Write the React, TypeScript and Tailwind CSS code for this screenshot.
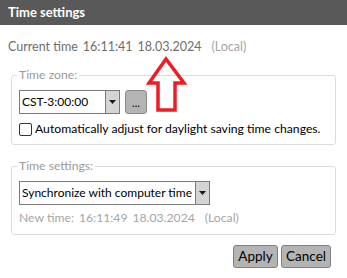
import React from 'react';

const font = { fontFamily: 'Lato, "Noto Sans", sans-serif' };

const Dropdown: React.FC<{ value: string; width: string }> = ({ value, width }) => (
  <div className={`flex h-[24px] ${width} border border-[#7a7a7a] bg-white`}>
    <span className="flex-1 whitespace-nowrap px-[2px] text-[12px] leading-[22px] text-black">{value}</span>
    <span className="flex w-[14px] items-center justify-center border-l border-[#7a7a7a] bg-[#d4d4d4]">
      <svg width="7" height="4" viewBox="0 0 7 4">
        <path d="M0 0h7L3.5 4z" fill="#1a1a1a" />
      </svg>
    </span>
  </div>
);

export default function App() {
  return (
    <div className="relative h-[278px] w-[347px] overflow-hidden bg-white" style={font}>
      {/* Barra de título */}
      <div className="flex h-[25px] items-center bg-[#595959] px-[8px]">
        <span className="text-[13px] font-bold text-white">Time settings</span>
      </div>

      {/* Hora actual */}
      <div className="mt-[14px] flex gap-[5px] px-[8px] text-[12.5px] leading-[16px] text-[#6e6e6e]">
        <span>Current time</span>
        <span>16:11:41</span>
        <span>18.03.2024</span>
        <span className="ml-[5px] text-[#a5a5a5]">(Local)</span>
      </div>

      {/* Zona horaria */}
      <fieldset className="mx-[11px] mt-[12px] rounded-[3px] border border-[#dadde0] px-[7px] pb-[7px]">
        <legend className="ml-[-2px] px-[2px] text-[12.2px] leading-[16px] text-[#9a9a9a]">Time zone:</legend>
        <div className="mt-[7px] flex gap-[5px]">
          <Dropdown value="CST-3:00:00" width="w-[101px]" />
          <button className="h-[24px] w-[22px] rounded-[3px] border border-[#8c8c8c] bg-[#b4b4b4] text-[11px] leading-none text-black">
            ...
          </button>
        </div>
        <label className="mt-[7px] flex items-center gap-[3px] whitespace-nowrap text-[12.2px] leading-[16px] text-black">
          <span className="h-[13px] w-[13px] shrink-0 rounded-[2px] border border-[#333] bg-white" />
          Automatically adjust for daylight saving time changes.
        </label>
      </fieldset>

      {/* Ajustes de hora */}
      <fieldset className="mx-[11px] mt-[13px] rounded-[3px] border border-[#dadde0] px-[7px] pb-[8px]">
        <legend className="ml-[-2px] px-[2px] text-[12.2px] leading-[16px] text-[#9a9a9a]">Time settings:</legend>
        <Dropdown value="Synchronize with computer time" width="w-[191px] mt-[7px]" />
        <div className="mt-[5px] flex gap-[5px] text-[12.2px] leading-[16px] text-[#a5a5a5]">
          <span>New time:</span>
          <span>16:11:49</span>
          <span>18.03.2024</span>
          <span className="ml-[5px]">(Local)</span>
        </div>
      </fieldset>

      {/* Botones */}
      <div className="mr-[16px] mt-[10px] flex justify-end gap-[3px]">
        <button className="h-[23px] w-[45px] rounded-[3px] border border-[#7f7f7f] bg-[#b4b4b4] text-[13.5px] text-black">Apply</button>
        <button className="h-[23px] w-[50px] rounded-[3px] border border-[#7f7f7f] bg-[#b4b4b4] text-[13.5px] text-black">Cancel</button>
      </div>

      {/* Flecha roja */}
      <svg className="absolute left-[146px] top-[54px]" width="42" height="60" viewBox="0 0 42 60">
        <path d="M20 5 L3 29 L12 29 L12 56 L29 56 L29 29 L38 29 Z" fill="none" stroke="#ee1c24" strokeWidth="3.5" strokeLinejoin="miter" />
      </svg>
    </div>
  );
}
